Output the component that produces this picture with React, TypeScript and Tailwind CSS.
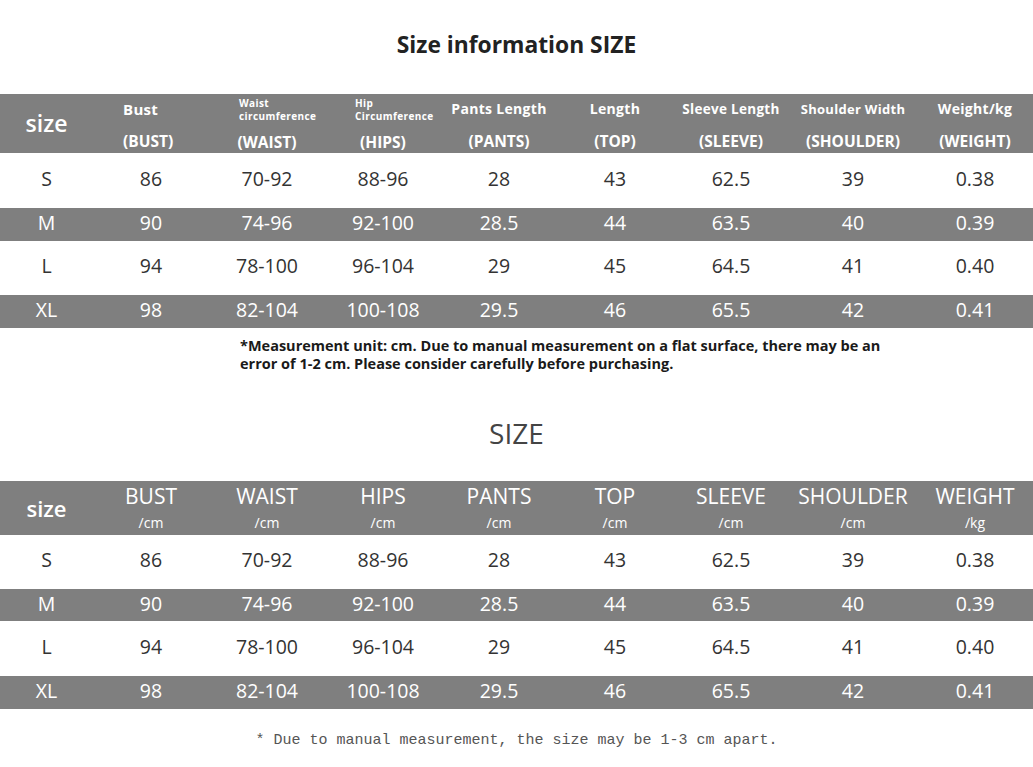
import React from "react";

const rows = [
  ["S", "86", "70-92", "88-96", "28", "43", "62.5", "39", "0.38"],
  ["M", "90", "74-96", "92-100", "28.5", "44", "63.5", "40", "0.39"],
  ["L", "94", "78-100", "96-104", "29", "45", "64.5", "41", "0.40"],
  ["XL", "98", "82-104", "100-108", "29.5", "46", "65.5", "42", "0.41"],
];

const cols = "grid grid-cols-[93px_116px_116px_116px_116px_116px_116px_128px_116px]";
const font = { fontFamily: '"Open Sans", "Liberation Sans", sans-serif' };

// row heights differ between the two tables, so pass them in
function DataRows({ heights }: { heights: string[] }) {
  return (
    <>
      {rows.map((r, i) => {
        const gray = i % 2 === 1;
        return (
          <div
            key={r[0]}
            className={`${cols} ${heights[i]} items-center pb-[4px] text-[19.5px] ${gray ? "bg-[#7f7f7f] text-white" : "bg-white text-[#333]"}`}
          >
            {r.map((c, j) => (
              <div key={j} className="text-center">
                {c}
              </div>
            ))}
          </div>
        );
      })}
    </>
  );
}

function TwoLine({
  top,
  bottom,
  size = "text-[14px]",
  left = false,
}: {
  top: string;
  bottom: string;
  size?: string;
  left?: boolean;
}) {
  return (
    <div className={`flex flex-col pt-[6px] ${left ? "items-start pl-[30px]" : "items-center"}`}>
      <div className={`${size} leading-[18px] font-bold tracking-[0.3px]`}>{top}</div>
      <div className="text-[15.5px] leading-[18px] font-bold mt-[14px]">{bottom}</div>
    </div>
  );
}

function SmallTwo({ a, b, bottom }: { a: string; b: string; bottom: string }) {
  return (
    <div className="flex flex-col">
      <div className="pl-[30px] pt-[3px] text-[10px] leading-[13px] font-bold tracking-[0.4px]">
        <div>{a}</div>
        <div>{b}</div>
      </div>
      <div className="text-center text-[15.5px] leading-[18px] font-bold mt-[10px]">{bottom}</div>
    </div>
  );
}

function Unit({ name, unit }: { name: string; unit: string }) {
  return (
    <div className="flex flex-col items-center pt-[1px]">
      <div className="text-[21px] leading-[28px] font-medium">{name}</div>
      <div className="text-[14px] leading-[18px] mt-[4px]">{unit}</div>
    </div>
  );
}

export default function App() {
  return (
    <div className="w-[1033px] h-[767px] overflow-hidden bg-white" style={font}>
      <div className="h-[90px] flex items-center justify-center text-[22.8px] font-bold text-[#222]">
        Size information SIZE
      </div>

      <div className="mt-[4px]">
        <div className={`${cols} h-[59px] bg-[#7f7f7f] text-white`}>
          <div className="flex items-center justify-center text-[23px] font-semibold">size</div>
          <TwoLine top="Bust" bottom="(BUST)" size="text-[15px]" left />
          <SmallTwo a="Waist" b="circumference" bottom="(WAIST)" />
          <SmallTwo a="Hip" b="Circumference" bottom="(HIPS)" />
          <TwoLine top="Pants Length" bottom="(PANTS)" />
          <TwoLine top="Length" bottom="(TOP)" />
          <TwoLine top="Sleeve Length" bottom="(SLEEVE)" size="text-[13.5px]" />
          <TwoLine top="Shoulder Width" bottom="(SHOULDER)" size="text-[13px]" />
          <TwoLine top="Weight/kg" bottom="(WEIGHT)" />
        </div>
        <DataRows heights={["h-[55px]", "h-[33px]", "h-[54px]", "h-[33px]"]} />
      </div>

      <div className="mt-[9px] pl-[240px] text-[14.5px] leading-[18px] font-bold text-[#1a1a1a]">
        <div>*Measurement unit: cm. Due to manual measurement on a flat surface, there may be an</div>
        <div>error of 1-2 cm. Please consider carefully before purchasing.</div>
      </div>

      <div className="mt-[30px] h-[60px] flex items-center justify-center text-[28px] text-[#444]">SIZE</div>

      <div className="mt-[18px]">
        <div className={`${cols} h-[54px] bg-[#7f7f7f] text-white`}>
          <div className="flex items-center justify-center text-[22px] font-semibold">size</div>
          <Unit name="BUST" unit="/cm" />
          <Unit name="WAIST" unit="/cm" />
          <Unit name="HIPS" unit="/cm" />
          <Unit name="PANTS" unit="/cm" />
          <Unit name="TOP" unit="/cm" />
          <Unit name="SLEEVE" unit="/cm" />
          <Unit name="SHOULDER" unit="/cm" />
          <Unit name="WEIGHT" unit="/kg" />
        </div>
        <DataRows heights={["h-[54px]", "h-[32px]", "h-[55px]", "h-[33px]"]} />
      </div>

      <div
        className="h-[62px] pt-[3px] flex items-center justify-center text-[15px] text-[#555]"
        style={{ fontFamily: '"Liberation Mono", "Noto Sans CJK SC", monospace' }}
      >
        * Due to manual measurement, the size may be 1-3 cm apart.
      </div>
    </div>
  );
}
